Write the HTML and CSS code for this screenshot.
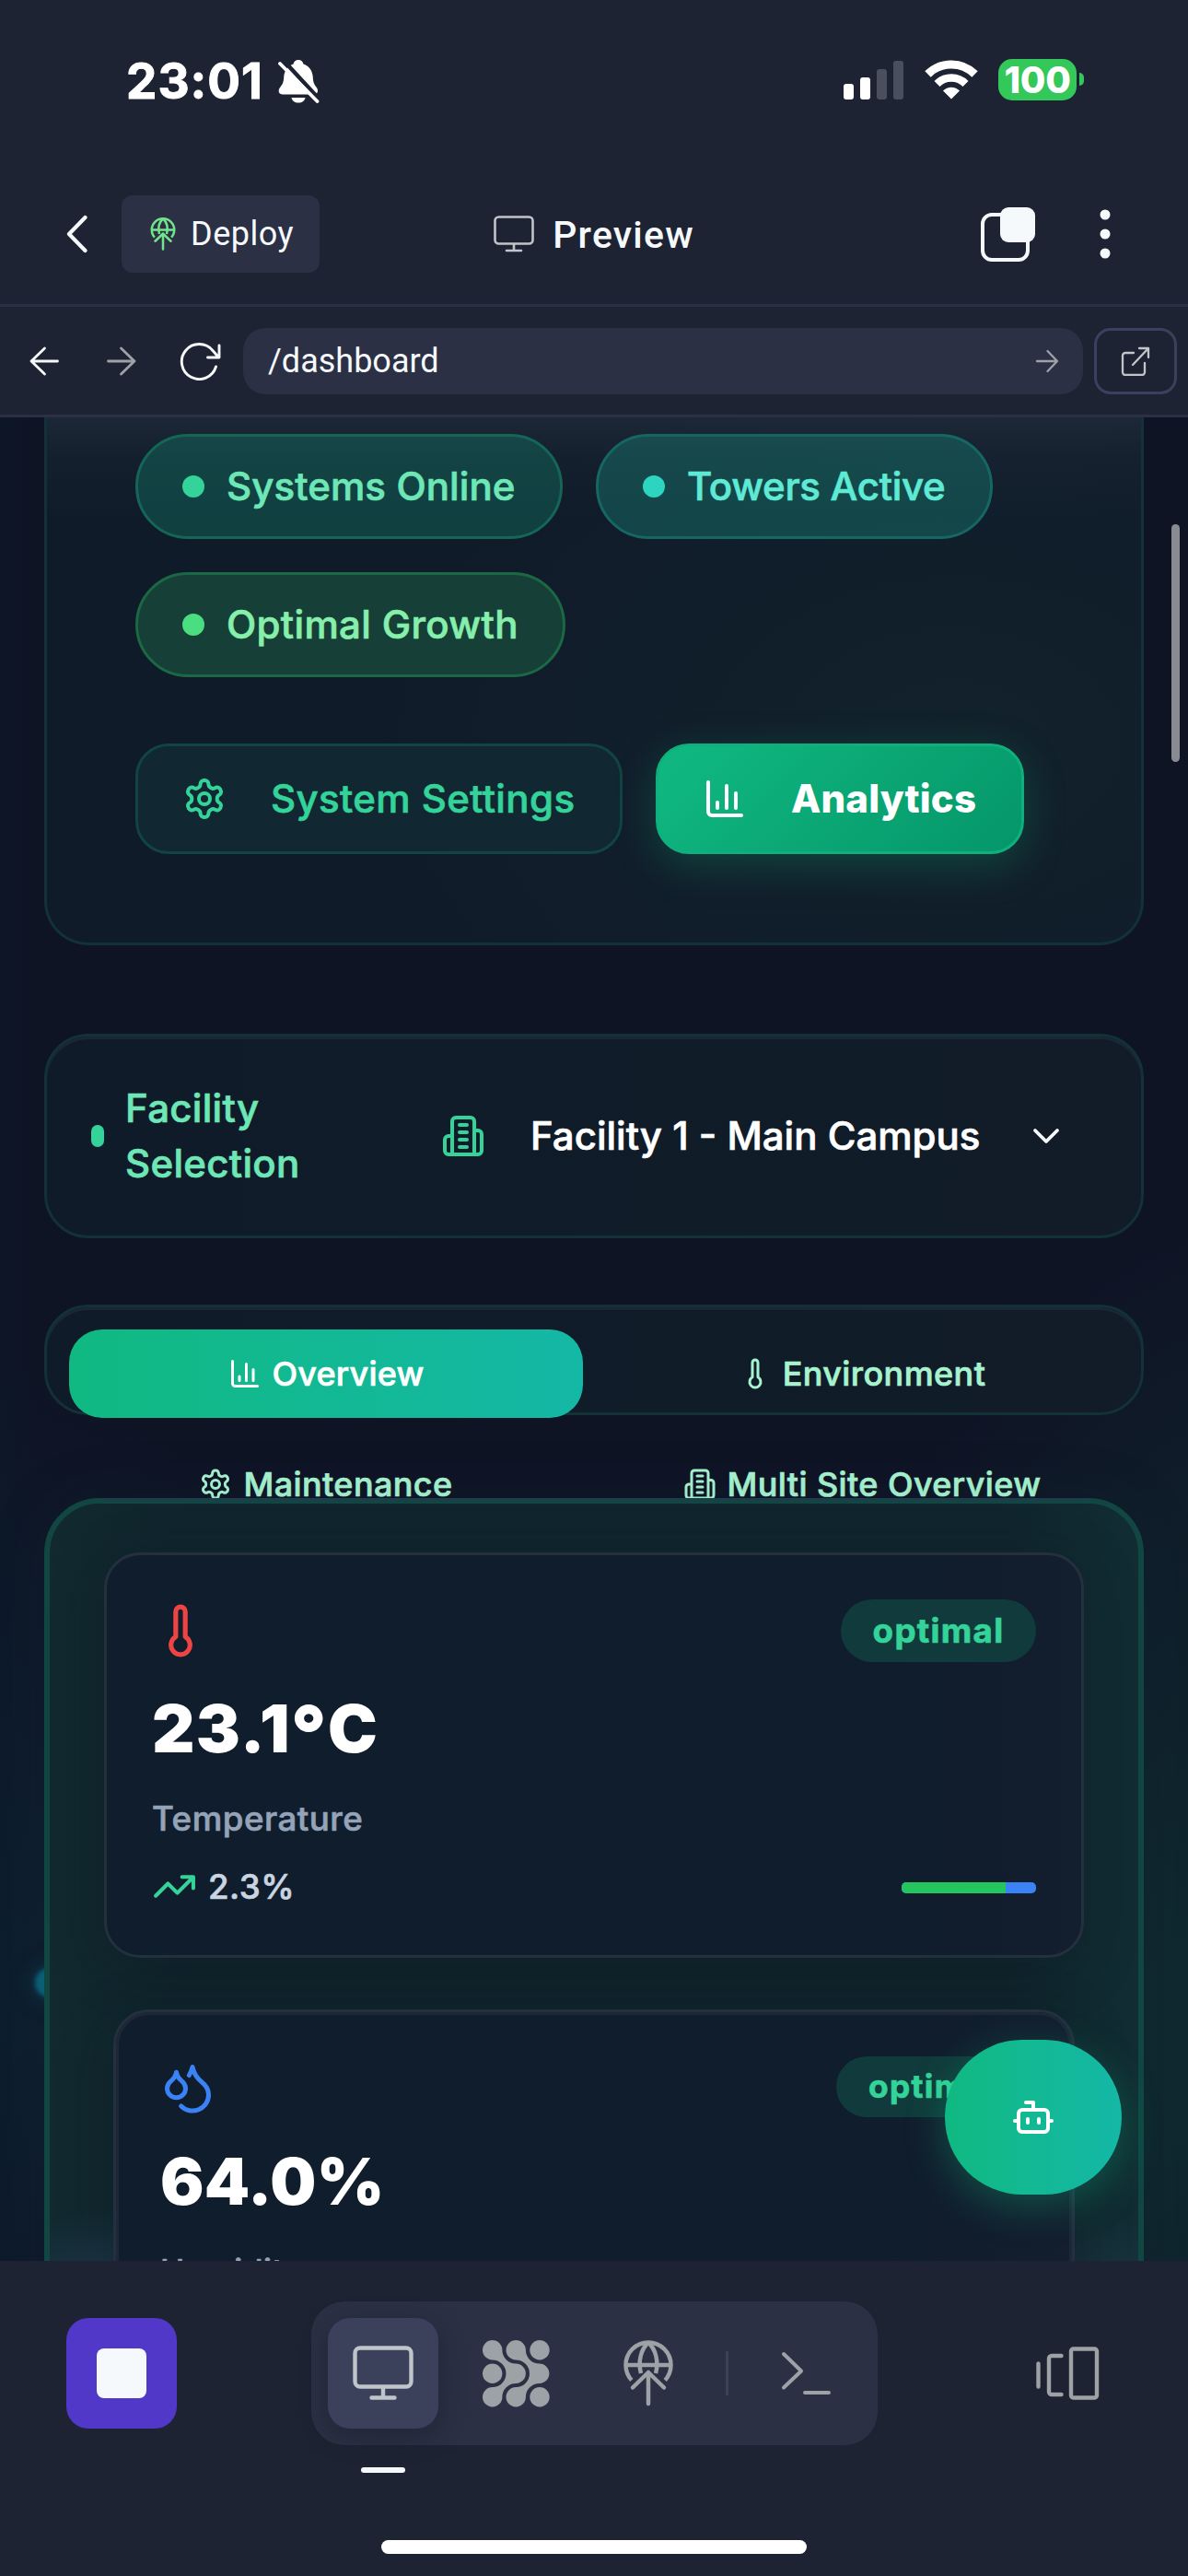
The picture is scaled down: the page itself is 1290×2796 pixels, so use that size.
FILE: index.html
```html
<!DOCTYPE html>
<html lang="en">
<head>
<meta charset="utf-8">
<title>Preview</title>
<link rel="stylesheet" href="styles.css">
</head>
<body>
<svg class="sprite" aria-hidden="true">
  <symbol id="i-deploy" viewBox="0 0 60 80"><circle cx="30" cy="31" r="24.5" pathLength="360" stroke-dasharray="264 96" stroke-dashoffset="-138" stroke-linecap="butt"/><path d="M6 31h48M30 6.5C22 14 18.5 27 22 40M30 6.5c8 7.500 11.500 20.500 8 33.500" stroke-linecap="butt"/><path d="M13 55.500 30 39l17 16.500M30 39v34"/></symbol>
  <symbol id="i-gear" viewBox="0 0 24 24"><path d="M12.220 2h-.44a2 2 0 0 0-2 2v.18a2 2 0 0 1-1 1.730l-.43.25a2 2 0 0 1-2 0l-.15-.08a2 2 0 0 0-2.730.73l-.22.38a2 2 0 0 0 .73 2.730l.15.1a2 2 0 0 1 1 1.720v.51a2 2 0 0 1-1 1.740l-.15.09a2 2 0 0 0-.73 2.730l.22.38a2 2 0 0 0 2.730.73l.15-.08a2 2 0 0 1 2 0l.43.25a2 2 0 0 1 1 1.730V20a2 2 0 0 0 2 2h.44a2 2 0 0 0 2-2v-.18a2 2 0 0 1 1-1.730l.43-.25a2 2 0 0 1 2 0l.15.08a2 2 0 0 0 2.730-.73l.22-.39a2 2 0 0 0-.73-2.730l-.15-.08a2 2 0 0 1-1-1.740v-.5a2 2 0 0 1 1-1.740l.15-.09a2 2 0 0 0 .73-2.730l-.22-.38a2 2 0 0 0-2.730-.73l-.15.08a2 2 0 0 1-2 0l-.43-.25a2 2 0 0 1-1-1.730V4a2 2 0 0 0-2-2z"/><circle cx="12" cy="12" r="3"/></symbol>
  <symbol id="i-chart" viewBox="0 0 24 24"><path d="M3 3v16a2 2 0 0 0 2 2h16M18 17V9M13 17V5M8 17v-3"/></symbol>
  <symbol id="i-thermo" viewBox="0 0 24 24"><path d="M14 4v10.540a4 4 0 1 1-4 0V4a2 2 0 0 1 4 0Z"/></symbol>
  <symbol id="i-building" viewBox="0 0 24 24"><path d="M6 22V4a2 2 0 0 1 2-2h8a2 2 0 0 1 2 2v18ZM6 12H4a2 2 0 0 0-2 2v6a2 2 0 0 0 2 2h2M18 9h2a2 2 0 0 1 2 2v9a2 2 0 0 1-2 2h-2M10 6h4M10 10h4M10 14h4M10 18h4"/></symbol>
</svg>

<header class="chrome">
  <div class="status">
    <div class="status-left">
      <span class="clock">23:01</span>
      <svg class="bell" width="46" height="48" viewBox="0 0 46 48"><path d="M23 1c3 0 5 2 5.500 4.500C35 8 38.500 13 38.800 20c.2 6 2 8.500 4 11 2.500 3.500 1.200 7.500-3.300 7.500H6C1.500 38.500.5 34.500 3 31c2.200-3 4-5 4.200-11C7.500 13 11 8 17.500 5.500 18 3 20 1 23 1Z" fill="#fff"/><path d="M15.500 42h15c-.5 3.500-3.500 5.500-7.500 5.500S16 45.500 15.500 42Z" fill="#fff"/><path d="M0-1 48 51" transform="translate(3.500 -1)" class="bell-cut"/><path d="M3 5 43.500 46" stroke="#fff" stroke-width="3.800" stroke-linecap="round"/></svg>
    </div>
    <div class="status-right">
      <div class="signal"><i class="s1"></i><i class="s2"></i><i class="s3"></i><i class="s4"></i></div>
      <svg width="58" height="43" viewBox="0 0 58 43"><g fill="none" stroke="#fff" stroke-width="9"><path d="M3.500 15.500a36 36 0 0 1 51 0"/><path d="M13.500 26a22 22 0 0 1 31 0" stroke-width="8.500"/></g><path d="M29 42.500 20 33.500a12.500 12.500 0 0 1 18 0Z" fill="#fff"/></svg>
      <div class="battery"><span>100</span></div>
    </div>
  </div>
  <div class="titlebar">
    <div class="title-left">
      <svg class="ico" width="24" height="42" viewBox="0 0 24 42" stroke-width="4.200"><path d="M20.500 3 3 21l17.500 18"/></svg>
      <button class="deploy"><svg class="ico" width="30" height="40" stroke-width="5"><use href="#i-deploy"/></svg><span>Deploy</span></button>
    </div>
    <div class="title-mid">
      <svg class="ico" width="44" height="40" viewBox="0 0 44 40" stroke-width="2.600"><rect x="1.500" y="1.500" width="41" height="29" rx="4"/><path d="M22 31v7M14 38h16"/></svg>
      <h1>Preview</h1>
    </div>
    <div class="title-right">
      <svg width="60" height="60" viewBox="0 0 60 60"><rect x="3" y="9" width="49" height="49" rx="10" fill="none" stroke="#f5f9fc" stroke-width="4"/><rect x="22" y="1" width="38" height="38" rx="9" fill="#f5f9fc"/></svg>
      <svg width="12" height="54" viewBox="0 0 12 54" fill="#f5f9fc"><circle cx="6" cy="6" r="5.500"/><circle cx="6" cy="27" r="5.500"/><circle cx="6" cy="48" r="5.500"/></svg>
    </div>
  </div>
  <nav class="addressbar">
    <div class="nav-icons">
      <svg class="ico" width="32" height="32" viewBox="0 0 32 32" stroke-width="2.800"><path d="M16.500 2 2 16l14.500 14M2 16h28.500"/></svg>
      <svg class="ico dim" width="32" height="32" viewBox="0 0 32 32" stroke-width="2.800"><path d="M15.500 2 30 16 15.500 30M30 16H1.500"/></svg>
      <svg class="ico" width="46" height="42" viewBox="0 0 46 42" stroke-width="2.900"><path d="M39.500 27A19 19 0 1 1 36 9.500l6.500 7.500M43 4v13H30.500"/></svg>
    </div>
    <div class="url"><span>/dashboard</span><svg class="ico dim" width="26" height="26" viewBox="0 0 26 26" stroke-width="2.300"><path d="M13.500 2 24 13 13.500 24M24 13H2"/></svg></div>
    <button class="open"><svg class="ico" width="32" height="32" viewBox="0 0 32 32" stroke-width="2.300"><path d="M14 7H5a3 3 0 0 0-3 3v18a3 3 0 0 0 3 3h18a3 3 0 0 0 3-3V18M20 2h10v10M30 2 13 20"/></svg></button>
  </nav>
</header>

<main class="view">
  <section class="hero">
    <div class="pills">
      <span class="pill emerald"><i></i><b>Systems Online</b></span>
      <span class="pill teal"><i></i><b>Towers Active</b></span>
      <span class="pill green"><i></i><b>Optimal Growth</b></span>
    </div>
    <div class="actions">
      <button class="btn"><svg class="ico" width="48" height="48" stroke-width="2"><use href="#i-gear"/></svg><b>System Settings</b></button>
      <button class="btn primary"><svg class="ico" width="48" height="48" stroke-width="2"><use href="#i-chart"/></svg><b>Analytics</b></button>
    </div>
  </section>

  <section class="facility">
    <i class="mark"></i>
    <span class="f-label">Facility Selection</span>
    <svg class="ico f-icon" width="48" height="48" stroke-width="2"><use href="#i-building"/></svg>
    <span class="f-name">Facility 1 - Main Campus</span>
    <svg class="ico" width="30" height="18" viewBox="0 0 30 18" stroke-width="3.800"><path d="m3 3 12 12L27 3"/></svg>
  </section>

  <section class="tabs">
    <span class="tab on"><svg class="ico" width="36" height="36" stroke-width="2"><use href="#i-chart"/></svg>Overview</span>
    <span class="tab"><svg class="ico" width="36" height="36" stroke-width="2"><use href="#i-thermo"/></svg>Environment</span>
    <span class="tab"><svg class="ico" width="36" height="36" stroke-width="2"><use href="#i-gear"/></svg>Maintenance</span>
    <span class="tab"><svg class="ico" width="36" height="36" stroke-width="2"><use href="#i-building"/></svg>Multi Site Overview</span>
  </section>

  <i class="orb"></i>

  <section class="panel">
    <article class="metric first">
      <div class="m-top"><svg class="ico red" width="62" height="62" stroke-width="2"><use href="#i-thermo"/></svg><span class="badge">optimal</span></div>
      <div class="m-value">23.1<span class="deg">°</span>C</div>
      <div class="m-label">Temperature</div>
      <div class="m-foot">
        <svg class="ico" width="49" height="49" viewBox="0 0 24 24" stroke-width="2"><path d="m22 7-8.500 8.500-5-5L2 17M16 7h6v6"/></svg>
        <span>2.3%</span>
        <div class="bar"><b style="width:77.500%"></b></div>
      </div>
    </article>
    <article class="metric second">
      <div class="m-top"><svg class="ico blue" width="60" height="60" viewBox="0 0 24 24" stroke-width="2"><path d="M7 16.300c2.200 0 4-1.830 4-4.050 0-1.160-.57-2.260-1.710-3.190S7.290 6.750 7 5.300c-.29 1.450-1.140 2.840-2.290 3.760S3 11.100 3 12.250c0 2.220 1.800 4.050 4 4.050z"/><path d="M12.560 6.600A10.970 10.970 0 0 0 14 3.020c.5 2.500 2 4.900 4 6.500s3 3.500 3 5.500a6.980 6.980 0 0 1-11.910 4.970"/></svg><span class="badge">optimal</span></div>
      <div class="m-value">64.0%</div>
      <div class="m-label">Humidity</div>
    </article>
  </section>

  <button class="fab"><svg class="ico" width="48" height="48" viewBox="0 0 24 24" stroke-width="2"><path d="M12 8V4H8"/><rect width="16" height="12" x="4" y="8" rx="2"/><path d="M2 14h2M20 14h2M15 13v2M9 13v2"/></svg></button>
  <i class="scroll"></i>
</main>

<footer class="dock">
  <div class="dock-row">
    <button class="stop"><i></i></button>
    <div class="tools">
      <span class="tool on"><svg class="ico" width="66" height="60" viewBox="0 0 66 60" stroke-width="4.400"><rect x="2.500" y="2.500" width="61" height="42" rx="5.500"/><path d="M33 46v10M20.500 56.500h25" /></svg></span>
      <span class="tool"><svg width="73" height="73" viewBox="0 0 73 73" fill="currentColor"><path id="wave" d="M0 10.700A10.700 10.700 0 0 1 21.400 10.700 14.800 14.800 0 0 0 36.200 25.500 10.700 10.700 0 0 1 36.200 46.900 14.800 14.800 0 0 0 21.400 61.700 10.700 10.700 0 1 1 10.700 51 14.800 14.800 0 0 0 10.700 21.400 10.700 10.700 0 0 1 0 10.700Z"/><use href="#wave" x="25.500"/><circle cx="10.700" cy="36.200" r="10.700"/><circle cx="62" cy="10.700" r="10.700"/><circle cx="62" cy="61.700" r="10.700"/></svg></span>
      <span class="tool"><svg class="ico" width="60" height="80" stroke-width="4.500"><use href="#i-deploy"/></svg></span>
      <i class="sep"></i>
      <span class="tool"><svg class="ico" width="54" height="48" viewBox="0 0 54 48" stroke-width="4"><path d="m3 3 19 18.500L3 39.500M26 45h26"/></svg></span>
    </div>
    <svg class="ico dim" width="70" height="60" viewBox="0 0 70 60" stroke-width="4.400"><path d="M3.500 19.500v25M28.500 11H18a3 3 0 0 0-3 3v36a3 3 0 0 0 3 3h10.500"/><rect x="39" y="3.500" width="28" height="53" rx="2.500"/></svg>
  </div>
  <div class="indicator"></div>
  <div class="home"></div>
</footer>
</body>
</html>
```
FILE: styles.css
```css
* { box-sizing: border-box; }
body { margin: 0; width: 1290px; height: 2796px; overflow: hidden; background: #1d2332; color: #f5f9fc; font-family: Inter, sans-serif; display: flex; flex-direction: column; }
button { font: inherit; color: inherit; border: 0; background: none; padding: 0; margin: 0; }
svg { display: block; flex: none; }
i { display: block; flex: none; }
b { font-weight: inherit; }
.sprite { position: absolute; width: 0; height: 0; }
.ico { fill: none; stroke: currentColor; stroke-linecap: round; stroke-linejoin: round; }
.dim { color: #9da2a6; }

/* browser chrome */
.chrome { height: 453px; flex: none; border-bottom: 3px solid #2b3044; font-family: Roboto, "Noto Sans", sans-serif; }
.status { height: 177px; padding: 0 113px 0 137px; display: flex; justify-content: space-between; align-items: flex-start; color: #fff; font-family: Inter, sans-serif; }
.status-left { display: flex; padding-top: 56px; gap: 14px; }
.clock { font-size: 53px; line-height: 64px; font-weight: 700; width: 150px; letter-spacing: 1px; white-space: nowrap; -webkit-text-stroke: 1px; }
.bell { margin-top: 8px; }
.bell-cut { fill: none; stroke: #1d2332; stroke-width: 4.500; }
.status-right { display: flex; align-items: center; padding-top: 64px; height: 109px; }
.signal { display: flex; align-items: flex-end; gap: 7px; height: 43px; margin-right: 23px; }
.signal i { width: 11px; border-radius: 3px; background: #fff; }
.signal .s1 { height: 17px; }
.signal .s2 { height: 24px; }
.signal .s3 { height: 33px; background: #4a4f5d; }
.signal .s4 { height: 42px; background: #4a4f5d; }
.battery { position: relative; width: 85px; height: 45px; margin-left: 22px; margin-right: 8px; border-radius: 15px; background: #34c759; display: flex; align-items: center; justify-content: center; font-size: 40px; font-weight: 800; letter-spacing: -0.300px; }
.battery::after { content: ""; position: absolute; right: -8px; top: 15px; width: 5px; height: 14px; background: #34c759; border-radius: 0 5px 5px 0; }
.titlebar { height: 156px; border-bottom: 3px solid #2b3044; padding: 0 72px; display: grid; grid-template-columns: 1fr auto 1fr; align-items: center; }
.title-left { display: flex; align-items: center; gap: 36px; }
.deploy { width: 215px; height: 84px; border-radius: 12px; background: #2b3044; display: flex; align-items: center; padding-left: 30px; gap: 15px; font-size: 36px; letter-spacing: 0.500px; }
.deploy .ico { color: #72e58a; }
.title-mid { display: flex; align-items: center; gap: 20px; }
.title-mid .ico { color: #c0c5c9; }
h1 { margin: 3px 0 0; font-size: 41px; line-height: 48px; font-weight: 500; letter-spacing: 1.200px; }
.title-right { display: flex; align-items: center; justify-content: flex-end; gap: 70px; padding-right: 12px; }
.addressbar { height: 117px; padding: 0 12px 0 32px; display: flex; align-items: center; }
.nav-icons { display: flex; align-items: center; width: 232px; }
.nav-icons .ico + .ico { margin-left: 52px; }
.nav-icons .ico + .ico + .ico { margin-left: 47px; }
.url { flex: 1; height: 72px; border-radius: 24px; background: #2b3044; padding: 0 26px 0 27px; display: flex; align-items: center; justify-content: space-between; font-size: 36px; letter-spacing: 0; }
.open { width: 90px; height: 72px; margin-left: 12px; border: 3px solid #3b415c; border-radius: 18px; display: flex; align-items: center; justify-content: center; color: #c0c5c9; }

/* previewed page */
.view { position: relative; height: 2001px; flex: none; overflow: hidden; padding: 0 48px; background:
  linear-gradient(90deg, rgba(8, 28, 42, .3), rgba(8, 28, 42, 0) 40px),
  radial-gradient(760px 1300px at 108% 88%, rgba(16, 66, 60, .55), rgba(16, 66, 60, 0) 70%),
  radial-gradient(500px 900px at 0 85%, rgba(14, 50, 66, .35), rgba(14, 50, 66, 0) 75%), #0f1425;
  -webkit-text-stroke: 0.700px; }
.hero { height: 573px; border: 3px solid #123237; border-top: 0; border-radius: 0 0 48px 48px; padding: 18px 96px 0; background:
  linear-gradient(180deg, rgba(60, 72, 86, .28), rgba(60, 72, 86, .1) 45px, rgba(60, 72, 86, 0) 110px),
  radial-gradient(620px 420px at 83% 62%, rgba(22, 46, 46, .35), rgba(22, 46, 46, 0)), #101b2a; }
.pills { display: flex; flex-wrap: wrap; gap: 36px; }
.pill { height: 114px; border: 3px solid; border-radius: 57px; padding: 0 48px; display: flex; align-items: center; gap: 24px; font-size: 42px; font-weight: 500; white-space: nowrap; }
.pill b, .btn b { padding-bottom: 2px; }
.pill i { width: 24px; height: 24px; border-radius: 50%; background: #34d399; }
.pill.emerald { width: 464px; color: #6ee7b7; background: rgba(18, 130, 105, .36); border-color: #146656; letter-spacing: 0.100px; }
.pill.teal { width: 431px; color: #5eead4; background: rgba(26, 145, 128, .36); border-color: #166663; letter-spacing: -0.300px; }
.pill.teal i { background: #2dd4bf; }
.pill.green { width: 467px; color: #86efac; background: #164037; border-color: #1a6844; letter-spacing: 0.350px; }
.pill.green i { background: #4ade80; }
.actions { display: flex; gap: 36px; margin-top: 72px; }
.btn { height: 120px; width: 529px; border: 3px solid #124441; border-radius: 36px; background: #112731; color: #34d399; padding-left: 48px; display: flex; align-items: center; gap: 48px; font-size: 42px; font-weight: 500; letter-spacing: 0.380px; white-space: nowrap; }
.btn.primary { width: 400px; color: #fff; font-weight: 800; letter-spacing: 0.150px; border-color: #10b07c; background: linear-gradient(135deg, #10b981, #059669); box-shadow: 0 12px 45px rgba(16, 185, 129, .25); -webkit-text-stroke: 0; }
.facility { margin-top: 96px; height: 222px; border: 3px solid #123237; border-radius: 48px; background: linear-gradient(90deg, #101b2a, #111c28); box-shadow: inset 0 3px #1b2735; padding-left: 48px; display: flex; align-items: center; font-size: 42px; line-height: 60px; font-weight: 500; letter-spacing: 0.300px; }
.mark { width: 14px; height: 24px; border-radius: 7px; background: #34d399; margin-right: 23px; }
.f-label { width: 230px; color: #6ee7b7; }
.f-icon { color: #34d399; margin-left: 113px; margin-right: 49px; }
.f-name { width: 545px; color: #fff; white-space: nowrap; letter-spacing: 0; }
.tabs { margin-top: 72px; height: 120px; border: 3px solid #123237; border-radius: 48px; background: linear-gradient(90deg, #101b2a, #111c28); box-shadow: inset 0 3px #1b2735; padding: 24px; display: grid; grid-template-columns: 558px 558px; gap: 24px; grid-auto-rows: 96px; }
.tab { display: flex; align-items: center; justify-content: center; gap: 12px; border-radius: 36px; font-size: 36px; font-weight: 500; letter-spacing: 0.400px; color: #a7f3d0; white-space: nowrap; padding-bottom: 1px; }
.tab.on { color: #fff; letter-spacing: 0.200px; background: linear-gradient(90deg, #10b981, #14b8a6); }
.orb { position: absolute; left: 38px; top: 1683px; width: 32px; height: 32px; border-radius: 50%; background: #0c6179; filter: blur(2px); box-shadow: 0 0 24px rgba(12, 97, 121, .5); }
.panel { position: relative; margin-top: 90px; height: 1100px; border: 6px solid #114642; border-radius: 60px; background:
  radial-gradient(120px 80px at 5% 845px, rgba(46, 72, 104, .45), rgba(46, 72, 104, 0)),
  radial-gradient(110px 80px at 97% 845px, rgba(40, 66, 84, .35), rgba(40, 66, 84, 0)),
  linear-gradient(90deg, #11292f, #10252d 12%, #10252d 88%, #112d33); box-shadow: 0 0 70px rgba(16, 60, 66, .1); padding: 53px 59px 0; }
.panel::before { content: ""; position: absolute; left: 54px; right: 54px; top: -6px; height: 3px; background: #1c3d4a; }
.metric { border: 3px solid #24303e; border-radius: 39px; background: linear-gradient(90deg, #101d2c 80%, #131e2e); box-shadow: 0 12px 60px rgba(12, 24, 34, .3); padding: 48px 49px 0; }
.first { height: 440px; }
.second { height: 500px; margin: 56px 10px 0; padding-left: 48px; padding-right: 48px; box-shadow: inset 0 0 0 3px #1c2837, 0 12px 60px rgba(12, 24, 34, .3); }
.m-top { height: 68px; display: flex; align-items: center; justify-content: space-between; }
.second .m-top { height: 66px; padding-top: 2px; }
.red { color: #ef4444; }
.blue { color: #3b82f6; }
.badge { height: 68px; width: 212px; border-radius: 34px; background: #103a3b; color: #34d399; display: flex; align-items: center; justify-content: center; font-size: 36.700px; font-weight: 700; letter-spacing: 1.300px; padding-bottom: 2px; }
.second .badge { height: 66px; width: 208px; font-size: 35.300px; margin-top: -2px; }
.m-value { margin-top: 32px; font-size: 72px; line-height: 80px; font-weight: 900; color: #fff; letter-spacing: 1.200px; -webkit-text-stroke: 0; }
.deg { font-size: 84px; line-height: 0; position: relative; top: 9px; }
.second .m-value { margin-top: 31px; font-size: 70.500px; line-height: 78px; letter-spacing: 0.200px; }
.m-label { margin-top: 34px; font-size: 36.700px; line-height: 48px; font-weight: 500; color: #94a3b8; letter-spacing: 0.500px; }
.second .m-label { font-size: 35.300px; margin-top: 35px; }
.m-foot { margin-top: 22px; height: 54px; display: flex; align-items: center; gap: 12px; color: #34d399; font-size: 36.700px; font-weight: 500; }
.m-foot span { color: #cbd5e1; letter-spacing: 0.500px; }
.bar { margin-left: auto; margin-top: 3px; width: 146px; height: 12px; border-radius: 5px; background: #3b82f6; overflow: hidden; }
.bar b { display: block; height: 12px; background: #22c55e; }
.fab { position: absolute; right: 72px; bottom: 72px; width: 192px; height: 168px; border-radius: 84px; background: linear-gradient(90deg, #10b981, #14b8a6); box-shadow: 0 12px 45px rgba(16, 185, 129, .33); display: flex; align-items: center; justify-content: center; color: #fff; }
.scroll { position: absolute; right: 9px; top: 116px; width: 9px; height: 258px; border-radius: 5px; background: #888c92; }

/* bottom dock */
.dock { height: 342px; flex: none; padding-top: 44px; display: flex; flex-direction: column; }
.dock-row { height: 156px; padding: 0 96px 0 72px; display: flex; align-items: center; gap: 146px; }
.dock-row > .dim { margin-left: auto; }
.stop { width: 120px; height: 120px; border-radius: 24px; background: #5138c9; display: flex; align-items: center; justify-content: center; flex: none; }
.stop i { width: 54px; height: 54px; border-radius: 8px; background: #f5f9fc; }
.tools { height: 156px; border-radius: 36px; background: #2b3044; padding: 18px; display: flex; align-items: center; gap: 24px; color: #9da2a6; }
.tool { width: 120px; height: 120px; border-radius: 24px; display: flex; align-items: center; justify-content: center; }
.tool.on { background: #3b415a; color: #c0c5c9; box-shadow: 0 8px 28px rgba(20, 24, 38, .45); }
.sep { width: 3px; height: 48px; background: #3b415c; }
.indicator { width: 48px; height: 6px; margin: 24px 0 0 392px; border-radius: 3px; background: #f5f9fc; }
.home { width: 462px; height: 15px; margin: 73px 0 0 414px; border-radius: 8px; background: #fff; }
```
